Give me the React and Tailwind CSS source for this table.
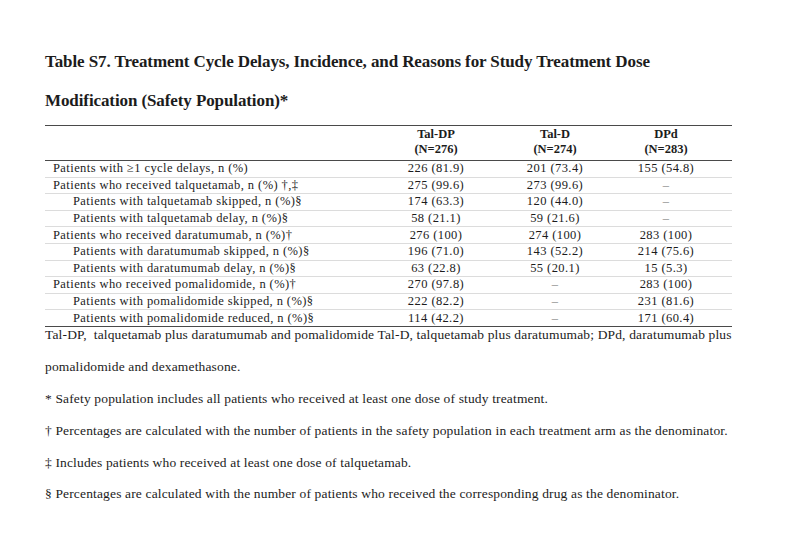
const rows = [
  { label: 'Patients with \u22651 cycle delays, n (%)', indent: false, v: ['226 (81.9)', '201 (73.4)', '155 (54.8)'] },
  { label: 'Patients who received talquetamab, n (%) \u2020,\u2021', indent: false, v: ['275 (99.6)', '273 (99.6)', '\u2013'] },
  { label: 'Patients with talquetamab skipped, n (%)\u00a7', indent: true, v: ['174 (63.3)', '120 (44.0)', '\u2013'] },
  { label: 'Patients with talquetamab delay, n (%)\u00a7', indent: true, v: ['58 (21.1)', '59 (21.6)', '\u2013'] },
  { label: 'Patients who received daratumumab, n (%)\u2020', indent: false, v: ['276 (100)', '274 (100)', '283 (100)'] },
  { label: 'Patients with daratumumab skipped, n (%)\u00a7', indent: true, v: ['196 (71.0)', '143 (52.2)', '214 (75.6)'] },
  { label: 'Patients with daratumumab delay, n (%)\u00a7', indent: true, v: ['63 (22.8)', '55 (20.1)', '15 (5.3)'] },
  { label: 'Patients who received pomalidomide, n (%)\u2020', indent: false, v: ['270 (97.8)', '\u2013', '283 (100)'] },
  { label: 'Patients with pomalidomide skipped, n (%)\u00a7', indent: true, v: ['222 (82.2)', '\u2013', '231 (81.6)'] },
  { label: 'Patients with pomalidomide reduced, n (%)\u00a7', indent: true, v: ['114 (42.2)', '\u2013', '171 (60.4)'] },
];

const notes = [
  'Tal-DP,  talquetamab plus daratumumab and pomalidomide Tal-D, talquetamab plus daratumumab; DPd, daratumumab plus',
  'pomalidomide and dexamethasone.',
  '* Safety population includes all patients who received at least one dose of study treatment.',
  '\u2020 Percentages are calculated with the number of patients in the safety population in each treatment arm as the denominator.',
  '\u2021 Includes patients who received at least one dose of talquetamab.',
  '\u00a7 Percentages are calculated with the number of patients who received the corresponding drug as the denominator.',
];

const Cell = ({ children }) => (
  <div className={children === '\u2013' ? 'text-center text-[#8a8a8a]' : 'text-center'}>{children}</div>
);

export default function App() {
  return (
    <div
      className="w-[800px] h-[546px] bg-white pl-[45px] pt-[42px] text-[#1c1c1c] overflow-hidden"
      style={{ fontFamily: '"Liberation Serif", "Times New Roman", serif' }}
    >
      <h1 className="text-[17px] font-bold leading-[39px] tracking-[-0.1px]">
        Table S7. Treatment Cycle Delays, Incidence, and Reasons for Study Treatment Dose
        <br />
        Modification (Safety Population)*
      </h1>

      <div className="mt-[5px] w-[687px] text-[12.5px] tracking-[0.42px]">
        <div className="grid grid-cols-[317px_148px_90px_132px] border-t-[1.5px] border-b-[1.5px] border-[#4a4a4a] pt-[1px] pb-[3px] font-bold text-[12.5px] leading-[15px] tracking-normal">
          <div />
          <div className="text-center">Tal-DP<br />(N=276)</div>
          <div className="text-center">Tal-D<br />(N=274)</div>
          <div className="text-center">DPd<br />(N=283)</div>
        </div>

        {rows.map((r, i) => (
          <div
            key={i}
            className={
              'grid grid-cols-[317px_148px_90px_132px] items-center h-[16.6px] leading-[15px] ' +
              (i === rows.length - 1 ? 'border-b-[1.5px] border-[#4a4a4a]' : 'border-b border-[#dcdcdc]')
            }
          >
            <div className={r.indent ? 'pl-[28px]' : 'pl-[8px]'}>{r.label}</div>
            {r.v.map((v, j) => (
              <Cell key={j}>{v}</Cell>
            ))}
          </div>
        ))}
      </div>

      <div className="flex flex-col gap-[15.9px] text-[13.5px] leading-[16px] tracking-[0.15px]">
        {notes.map((n, i) => (
          <p key={i} className="whitespace-pre">{n}</p>
        ))}
      </div>
    </div>
  );
}
